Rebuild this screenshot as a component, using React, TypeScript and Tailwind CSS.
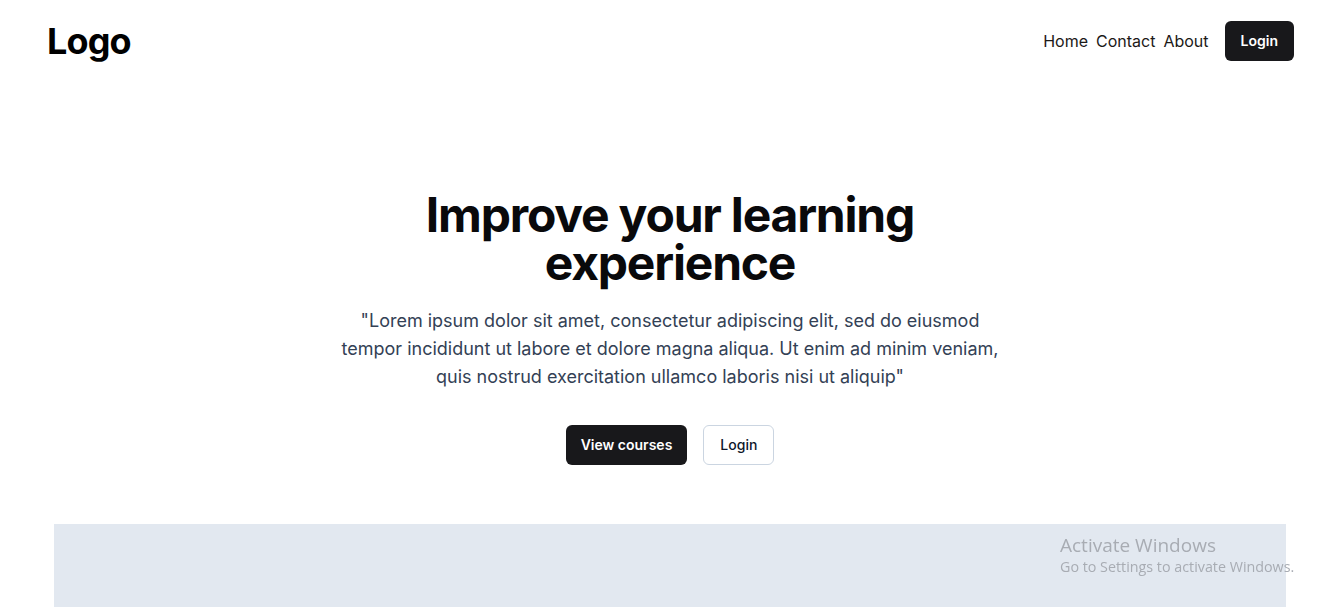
import React from "react";

const font = { fontFamily: "Inter, 'Noto Sans', sans-serif" };

const Header = () => {
  return (
    <header className="flex h-[82px] items-center justify-between pl-[47px] pr-[41px]">
      <span className="text-4xl font-bold tracking-tight text-black">Logo</span>
      <nav className="flex items-center">
        <div className="flex gap-2 text-base text-[#1c1917]">
          <a href="#">Home</a>
          <a href="#">Contact</a>
          <a href="#">About</a>
        </div>
        <button className="ml-4 h-10 rounded-md bg-[#18181b] px-4 text-sm font-semibold text-white">
          Login
        </button>
      </nav>
    </header>
  );
};

const Hero = () => {
  return (
    <section className="flex flex-col items-center pt-[109px] text-center">
      <h1 className="max-w-[520px] text-5xl leading-none font-bold tracking-tight text-[#09090b]">
        Improve your learning experience
      </h1>
      <p className="mt-5 max-w-[672px] text-lg text-[#334155]">
        "Lorem ipsum dolor sit amet, consectetur adipiscing elit, sed do eiusmod
        tempor incididunt ut labore et dolore magna aliqua. Ut enim ad minim
        veniam, quis nostrud exercitation ullamco laboris nisi ut aliquip"
      </p>
      <div className="mt-[34px] flex gap-4">
        <button className="h-10 rounded-md bg-[#18181b] px-[15px] text-sm font-semibold text-white">
          View courses
        </button>
        <button className="h-10 rounded-md border border-[#cbd5e1] bg-white px-4 text-sm font-medium text-[#0f172a]">
          Login
        </button>
      </div>
    </section>
  );
};

export default function App() {
  return (
    <div className="relative min-h-screen bg-white" style={font}>
      <Header />
      <div className="ml-[54px] mr-[49px]">
        <Hero />
        <div className="mt-[59px] h-[300px] bg-[#e2e8f0]" />
      </div>
      <div
        className="pointer-events-none fixed left-[1060px] top-[533px]"
        style={{ fontFamily: "'Open Sans', 'Noto Sans', sans-serif" }}
      >
        <div className="text-[19px] leading-6 text-[#a8acb3]">Activate Windows</div>
        <div className="text-[14.3px] leading-5 text-[#a8acb3]">Go to Settings to activate Windows.</div>
      </div>
    </div>
  );
}
